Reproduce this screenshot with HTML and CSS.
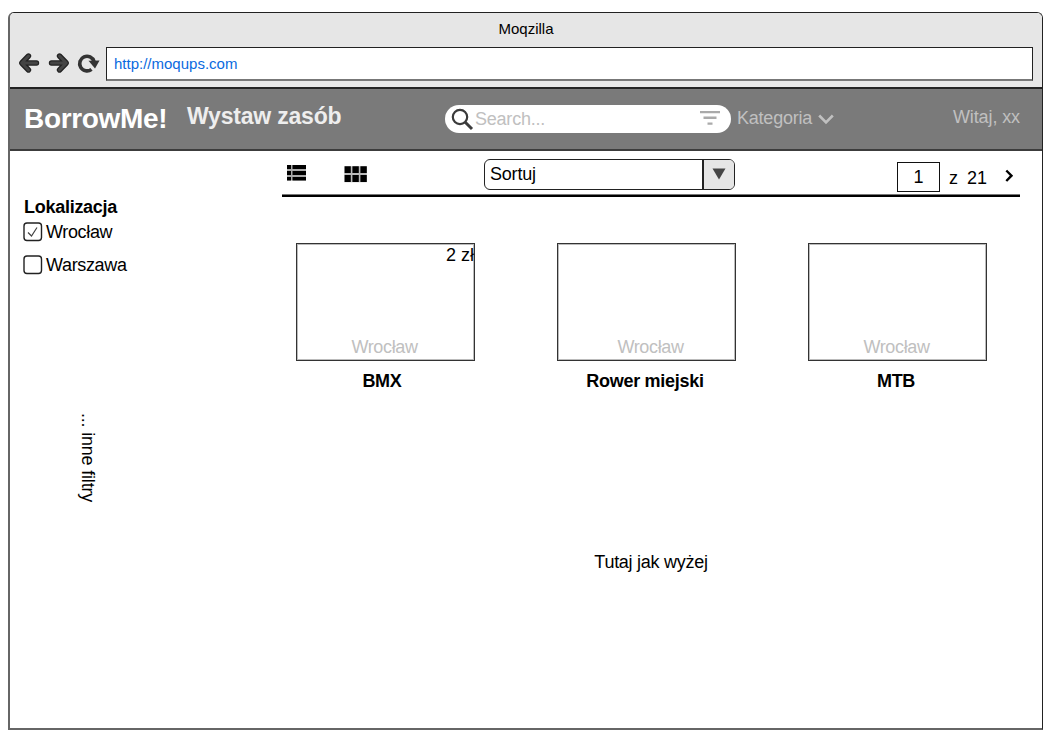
FILE: index.html
```html
<!DOCTYPE html>
<html lang="pl">
<head>
<meta charset="utf-8">
<title>BorrowMe!</title>
<link rel="stylesheet" href="styles.css">
</head>
<body>
<div class="window">
  <div class="chrome">
    <div class="title">Moqzilla</div>
    <div class="toolbar">
      <svg class="nav" width="88" height="26" viewBox="0 0 88 26">
        <g fill="none" stroke="#222" stroke-width="5.400" stroke-linecap="round" stroke-linejoin="round">
          <path d="M18.500 13H5M10.500 6L3.700 13L10.500 20"/>
          <path d="M33.500 13H47M41.500 6L48.300 13L41.500 20"/>
        </g>
        <g fill="none" stroke="#444" stroke-width="3" stroke-linecap="round" stroke-linejoin="round">
          <path d="M18.500 13H5M10.500 6L3.700 13L10.500 20"/>
          <path d="M33.500 13H47M41.500 6L48.300 13L41.500 20"/>
        </g>
        <path d="M73.500 19.300A7.300 7.300 0 1 1 76 11.500" fill="none" stroke="#333" stroke-width="3.600"/>
        <path d="M70.500 10.800L81.500 10.500L77 18.500Z" fill="#333"/>
      </svg>
      <div class="url"><span>http://moqups.com</span></div>
    </div>
  </div>
  <header class="header">
    <div class="brand">BorrowMe!</div>
    <div class="offer">Wystaw zasób</div>
    <div class="search">
      <svg width="23" height="23" viewBox="0 0 23 23" fill="none" stroke="#3b3b3b"><circle cx="9" cy="9" r="7.200" stroke-width="2.200"/><path d="M14 14L21 21" stroke-width="3"/></svg>
      <span class="placeholder">Search...</span>
      <svg width="20" height="14" viewBox="0 0 20 14" fill="#aaa"><path d="M0 0H20V2.200H0ZM3.500 5.500H16.500V8H3.500ZM7.500 11.500H12.500V13.800H7.500Z"/></svg>
    </div>
    <div class="category"><span>Kategoria</span><svg width="16" height="11" viewBox="0 0 16 11" fill="none" stroke="#c0c0c0" stroke-width="2.600"><path d="M1.200 1.500L8 8.500L14.800 1.500"/></svg></div>
    <div class="welcome">Witaj, xx</div>
  </header>
  <main class="body">
    <aside class="sidebar">
      <h2 class="filter-title">Lokalizacja</h2>
      <div class="check"><svg width="20" height="20" viewBox="0 0 20 20" fill="#fff" stroke="#222"><rect x="1" y="1" width="17.500" height="17.500" rx="3" stroke-width="1.400"/><path d="M5 10.500L8.500 14L14 5.500" fill="none" stroke="#444" stroke-width="1.200"/></svg><span>Wrocław</span></div>
      <div class="check"><svg width="20" height="20" viewBox="0 0 20 20" fill="#fff" stroke="#222"><rect x="1" y="1" width="17.500" height="17.500" rx="3" stroke-width="1.400"/></svg><span>Warszawa</span></div>
      <div class="more">... inne filtry</div>
    </aside>
    <section class="content">
      <div class="controls">
        <svg class="list" width="19" height="16" viewBox="0 0 19 16"><path fill="#aaa" d="M0 0H19V15.500H0Z"/><path d="M0 0H4V4H0ZM5.500 0H19V4H5.500ZM0 6H4V10H0ZM5.500 6H19V10H5.500ZM0 12H4V15.500H0ZM5.500 12H19V15.500H5.500Z"/></svg>
        <svg class="tiles" width="23" height="17" viewBox="0 0 23 17"><path fill="#bbb" d="M.3 .3H22.800V16.300H.3Z"/><path d="M.6 .3H6.800V7H.6ZM8.400 .3H14.800V7H8.400ZM16.400 .3H22.800V7H16.400ZM.6 9H6.800V16H.6ZM8.400 9H14.800V16H8.400ZM16.400 9H22.800V16H16.400Z"/></svg>
        <div class="select"><span class="select-label">Sortuj</span><span class="select-arrow"><svg width="14" height="12" viewBox="0 0 14 12"><path d="M.5 .5H13.500L7 11.500Z" fill="#444"/></svg></span></div>
        <div class="pager">
          <span class="page">1</span><span class="of">z</span><span class="total">21</span>
          <svg width="9" height="14" viewBox="0 0 9 14" fill="none" stroke="#000" stroke-width="2.400"><path d="M1.300 1.500L6.500 6.700L1.300 12"/></svg>
        </div>
      </div>
      <div class="cards">
        <div class="card"><div class="thumb"><span class="price">2 zł</span><span class="city">Wrocław</span></div><div class="name bmx">BMX</div></div>
        <div class="card second"><div class="thumb"><span class="city">Wrocław</span></div><div class="name rower">Rower miejski</div></div>
        <div class="card third"><div class="thumb"><span class="city">Wrocław</span></div><div class="name mtb">MTB</div></div>
      </div>
      <div class="note">Tutaj jak wyżej</div>
    </section>
  </main>
</div>
</body>
</html>
```
FILE: styles.css
```css
* { box-sizing: border-box; }
body { margin: 0; padding: 12px 0 0 8px; background: #fff; color: #000; font: 18px/22px "Liberation Sans", Arial, sans-serif; white-space: nowrap; }
svg { display: block; flex: none; overflow: visible; }
.window { width: 1035px; height: 718px; border: 1px solid #222; border-left: 2px solid #666; border-bottom: 2px solid #666; border-radius: 6px 6px 0 0; overflow: hidden; display: flex; flex-direction: column; }
.chrome { height: 74px; flex: none; background: #e6e6e6; }
.title { height: 34px; padding-top: 5px; text-align: center; font-size: 15px; }
.toolbar { display: flex; padding-left: 8px; }
.nav { margin-top: 3px; }
.url { width: 927px; height: 34px; border: 1px solid #222; border-bottom: 2px solid #777; background: #fff; padding: 5px 0 0 7px; color: #0a6ae0; font-size: 15px; }
.header { height: 64px; flex: none; background: #7a7a7a; border-top: 2px solid #222; border-bottom: 2px solid #3c3c3c; display: flex; align-items: flex-start; color: #c0c0c0; margin-top: 0; letter-spacing: -.22px; }
.chrome { height: 74px; }
.brand { width: 163px; padding: 14px 0 0 14px; font-size: 28px; line-height: 32px; font-weight: bold; color: #fff; letter-spacing: -.33px; }
.offer { width: 272px; padding: 13px 0 0 14px; font-size: 23px; line-height: 28px; font-weight: bold; color: #eee; letter-spacing: -.2px; }
.search { width: 286px; height: 28px; margin-top: 16px; border-radius: 14px; background: #fff; display: flex; align-items: center; padding: 0 11px 0 6px; }
.placeholder { flex: 1; padding-left: 1px; }
.search svg:last-child { margin-bottom: 3px; }
.category { display: flex; align-items: center; gap: 6px; padding: 18px 0 0 6px; width: 189px; }
.category svg { margin-top: 3px; }
.welcome { flex: 1; text-align: right; padding: 17px 22px 0 0; letter-spacing: -.1px; }
.body { flex: 1; display: flex; }
.sidebar { width: 272px; padding: 45px 0 0 13px; letter-spacing: -.35px; }
.filter-title { margin: 0 0 3px 1px; font-size: 18px; line-height: 22px; font-weight: bold; letter-spacing: -.27px; }
.check { display: flex; height: 24px; gap: 3px; margin-bottom: 9px; }
.check svg { margin-top: 1px; }
.more { writing-mode: vertical-rl; margin: 135px 0 0 55px; line-height: 20px; letter-spacing: -.2px; }
.content { width: 738px; }
.controls { height: 46px; border-bottom: 2px solid #000; box-shadow: inset 0 -1px 0 #777; display: flex; align-items: flex-start; }
.list { margin: 14px 0 0 5px; }
.tiles { margin: 15px 0 0 38px; }
.select { width: 251px; height: 31px; margin: 8px 0 0 117px; border: 1.500px solid #222; border-radius: 6px; display: flex; overflow: hidden; }
.select-label { flex: 1; padding: 3px 0 0 5px; letter-spacing: -.2px; }
.select-arrow { width: 32px; border-left: 2px solid #222; background: #e5e5e5; padding: 8px 0 0 8px; }
.pager { margin-left: 162px; padding-top: 11px; display: flex; }
.page { width: 43px; height: 30px; border: 1px solid #111; padding-top: 3px; text-align: center; }
.of { margin: 5px 0 0 9px; }
.total { margin: 5px 0 0 9px; }
.pager svg { margin: 7px 0 0 18px; }
.cards { display: flex; padding: 46px 0 0 14px; }
.card { width: 179px; }
.second { margin-left: 82px; }
.third { margin-left: 72px; }
.thumb { height: 118px; border: 1px solid #333; box-shadow: inset 0 0 0 1px #bbb; display: flex; flex-direction: column; justify-content: flex-end; }
.price { align-self: flex-end; margin: 0 0 auto; }
.city { text-align: center; color: #c0c0c0; margin-bottom: 2px; padding-right: 2px; letter-spacing: -.35px; }
.second .city { padding: 0 0 0 8px; }
.name { margin-top: 9px; text-align: center; font-weight: bold; letter-spacing: -.27px; }
.bmx { padding-right: 7px; }
.rower { padding-right: 3px; }
.mtb { padding-right: 3px; }
.note { margin: 159px 0 0; text-align: center; letter-spacing: -.27px; }
```
